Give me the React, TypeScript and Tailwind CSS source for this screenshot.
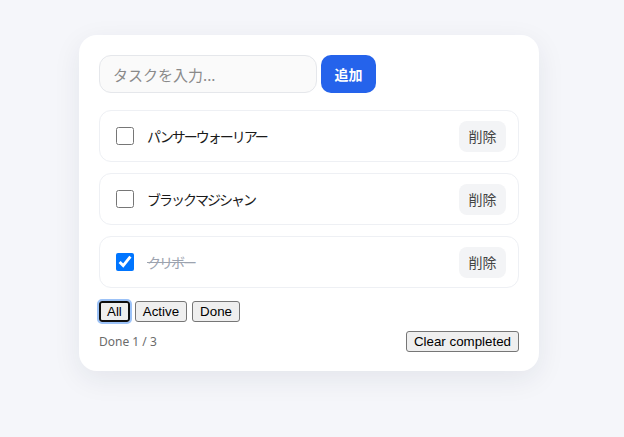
import React, { useState } from 'react';

// ─── Types ────────────────────────────────────────────────────────────────────

interface Task {
  id: number;
  title: string;
  done: boolean;
}

type Filter = 'all' | 'active' | 'done';

const jp = { fontFamily: '"Noto Sans CJK JP", "Noto Sans", sans-serif' };
const native = { fontFamily: '"Liberation Sans", Arial, sans-serif' };

const initialTasks: Task[] = [
  { id: 1, title: 'パンサーウォーリアー', done: false },
  { id: 2, title: 'ブラックマジシャン', done: false },
  { id: 3, title: 'クリボー', done: true },
];

// ─── Component ────────────────────────────────────────────────────────────────

export default function App() {
  const [tasks, setTasks] = useState<Task[]>(initialTasks);
  const [filter, setFilter] = useState<Filter>('all');
  const [draft, setDraft] = useState('');

  const doneCount = tasks.filter((t) => t.done).length;
  const visible = tasks.filter((t) =>
    filter === 'all' ? true : filter === 'active' ? !t.done : t.done
  );

  const addTask = () => {
    if (!draft.trim()) return;
    setTasks([...tasks, { id: Date.now(), title: draft.trim(), done: false }]);
    setDraft('');
  };

  const filterBtn = (key: Filter, label: string) => (
    <button
      key={key}
      onClick={() => setFilter(key)}
      style={native}
      className={`h-[21px] bg-[#efefef] text-[13.33px] text-black leading-none rounded-[3px] ${
        filter === key
          ? 'px-[6px] border-2 border-[#101010] outline outline-2 outline-[#9cc2f7]'
          : 'px-[7px] border border-[#767676]'
      }`}
    >
      {label}
    </button>
  );

  return (
    <div className="min-h-[437px] w-full bg-[#f5f6fa] pt-[35px] pl-[79px]" style={jp}>
      <div className="w-[460px] bg-white rounded-[18px] shadow-[0_8px_28px_rgba(30,40,70,0.08)] px-5 pt-5 pb-[19px]">
        {/* ── Input row ── */}
        <div className="flex gap-1">
          <input
            value={draft}
            onChange={(e) => setDraft(e.target.value)}
            placeholder="タスクを入力..."
            style={jp}
            className="w-[218px] h-[38px] rounded-xl border border-[#e5e7eb] bg-[#fafafa] px-[13px] text-[15px] text-gray-800 placeholder:text-[#8a8a8a] outline-none"
          />
          <button
            onClick={addTask}
            className="w-[55px] h-[38px] rounded-[10px] bg-[#2563eb] text-white text-[14px] font-bold"
          >
            追加
          </button>
        </div>

        {/* ── Task list ── */}
        <ul className="mt-[17px] flex flex-col gap-[11px]">
          {visible.map((task) => (
            <li
              key={task.id}
              className="h-[52px] flex items-center border border-[#eef0f4] rounded-xl pl-4 pr-3"
            >
              <input
                type="checkbox"
                checked={task.done}
                onChange={() =>
                  setTasks(tasks.map((t) => (t.id === task.id ? { ...t, done: !t.done } : t)))
                }
                className="w-[18px] h-[18px] accent-[#0075ff]"
              />
              <span
                className={`ml-[13px] flex-1 text-[14px] tracking-[-2px] ${
                  task.done ? 'line-through text-[#9ca3af]' : 'text-[#1a1a1a]'
                }`}
              >
                {task.title}
              </span>
              <button
                onClick={() => setTasks(tasks.filter((t) => t.id !== task.id))}
                className="h-[31px] w-[47px] rounded-lg bg-[#f3f4f6] text-[14px] text-[#444]"
              >
                削除
              </button>
            </li>
          ))}
        </ul>

        {/* ── Filters ── */}
        <div className="mt-[13px] flex gap-[5px]">
          {filterBtn('all', 'All')}
          {filterBtn('active', 'Active')}
          {filterBtn('done', 'Done')}
        </div>

        {/* ── Footer ── */}
        <div className="mt-[9px] flex items-center justify-between">
          <span className="text-[12px] text-[#6b6b6b]" style={{ fontFamily: '"Noto Sans", sans-serif' }}>
            Done {doneCount} / {tasks.length}
          </span>
          <button
            onClick={() => setTasks(tasks.filter((t) => !t.done))}
            style={native}
            className="h-[21px] px-[7px] border border-[#767676] bg-[#efefef] text-[13.33px] text-black rounded-[3px] leading-none"
          >
            Clear completed
          </button>
        </div>
      </div>
    </div>
  );
}
